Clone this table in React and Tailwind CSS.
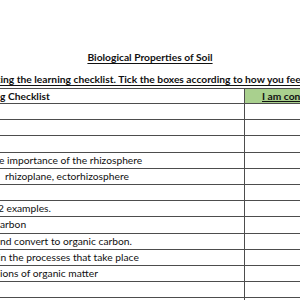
import React from 'react';

const rows = [
  { text: '', shift: 0 },
  { text: '', shift: 0 },
  { text: '', shift: 0 },
  { text: 'e importance of the rhizosphere', shift: -1 },
  { text: 'rhizoplane, ectorhizosphere', shift: 5 },
  { text: '', shift: 0 },
  { text: '2 examples.', shift: -2 },
  { text: 'arbon', shift: 0 },
  { text: 'nd convert to organic carbon.', shift: 0 },
  { text: 'in the processes that take place', shift: -2 },
  { text: 'ions of organic matter', shift: 0 },
  { text: '', shift: 0 },
  { text: '', shift: 0 },
];

const App = () => {
  return (
    <div className="w-[300px] h-[300px] overflow-hidden bg-white text-[#111] font-['Lato',_'Liberation_Sans',_sans-serif]">
      {/* Title */}
      <div className="pt-[48px] h-[72px] text-center leading-[14px]">
        <span className="text-[10.25px] font-bold underline underline-offset-2">Biological Properties of Soil</span>
      </div>

      {/* Instructions */}
      <div className="h-[16px] whitespace-nowrap overflow-hidden">
        <span className="block -ml-[5px] text-[10.25px] font-bold underline underline-offset-2 leading-[14px]">
          king the learning checklist. Tick the boxes according to how you feel
        </span>
      </div>

      {/* Checklist table */}
      <div className="border-t border-[#4d4d4d]">
        <div className="grid grid-cols-[245px_1fr] h-[15px] border-b border-[#4d4d4d]">
          <div className="border-r border-[#4d4d4d] overflow-hidden whitespace-nowrap">
            <span className="block text-[10.25px] font-bold leading-[14px]">g Checklist</span>
          </div>
          <div className="bg-[#a9d08e] overflow-hidden whitespace-nowrap pl-[17px]">
            <span className="block text-[10.25px] font-bold underline leading-[14px]">I am confident</span>
          </div>
        </div>
        {rows.map((row, i) => (
          <div key={i} className="grid grid-cols-[245px_1fr] h-[16.2px] border-b border-[#4d4d4d]">
            <div className="border-r border-[#4d4d4d] overflow-hidden whitespace-nowrap">
              <span className="block text-[10.25px] leading-[15px]" style={{ marginLeft: row.shift }}>
                {row.text}
              </span>
            </div>
            <div />
          </div>
        ))}
      </div>
    </div>
  );
};

export default App;
